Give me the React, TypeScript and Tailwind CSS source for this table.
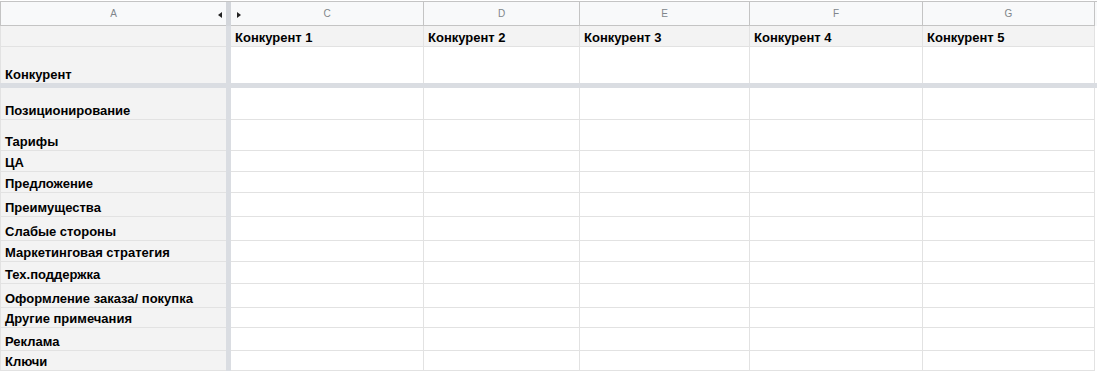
import React from "react";

// Ширины столбцов C..G (правая граница входит в ширину)
const cols = [
  { letter: "C", w: "w-[193px]", title: "Конкурент 1" },
  { letter: "D", w: "w-[156px]", title: "Конкурент 2" },
  { letter: "E", w: "w-[170px]", title: "Конкурент 3" },
  { letter: "F", w: "w-[173px]", title: "Конкурент 4" },
  { letter: "G", w: "w-[172px]", title: "Конкурент 5" },
];

const rows = [
  { label: "Позиционирование", h: "h-[32px]" },
  { label: "Тарифы", h: "h-[31px]" },
  { label: "ЦА", h: "h-[21px]" },
  { label: "Предложение", h: "h-[21px]" },
  { label: "Преимущества", h: "h-[24px]" },
  { label: "Слабые стороны", h: "h-[24px]" },
  { label: "Маркетинговая стратегия", h: "h-[21px]" },
  { label: "Тех.поддержка", h: "h-[22px]" },
  { label: "Оформление заказа/ покупка", h: "h-[24px]" },
  { label: "Другие примечания", h: "h-[20px]" },
  { label: "Реклама", h: "h-[23px]" },
  { label: "Ключи", h: "h-[20px]" },
];

function FreezeBar() {
  return <div className="w-[5px] shrink-0 bg-[#dadde2]" />;
}

function LabelCell({ children }: { children?: React.ReactNode }) {
  return (
    <div className="w-[226px] shrink-0 flex items-end pl-[4px] pb-0 bg-[#f3f3f3] border-b border-l border-[#e2e2e2] text-[13px] font-bold leading-[16px] text-black whitespace-nowrap">
      {children}
    </div>
  );
}

function Row({ label, h }: { label: string; h: string }) {
  return (
    <div className={`flex ${h}`}>
      <LabelCell>{label}</LabelCell>
      <FreezeBar />
      {cols.map((c) => (
        <div key={c.letter} className={`${c.w} shrink-0 bg-white border-r border-b border-[#e2e2e2]`} />
      ))}
    </div>
  );
}

export default function App() {
  return (
    <div
      className="w-[1097px] h-[372px] overflow-hidden bg-white pt-[1px]"
      style={{ fontFamily: "'Liberation Sans', Arial, sans-serif" }}
    >
      {/* ── буквы столбцов ── */}
      <div className="flex h-[25px] border-t border-[#c4c4c4] bg-[#f8f9fa] text-[10px] text-[#80868b]">
        <div className="w-[226px] shrink-0 relative flex items-center justify-center border-b border-l border-[#c4c4c4]">
          A
          <svg className="absolute right-[4px] top-[10px]" width="4" height="6" viewBox="0 0 4 6">
            <path d="M4 0 L0 3 L4 6 Z" fill="#222" />
          </svg>
        </div>
        <div className="w-[5px] shrink-0 bg-[#d3d6db]" />
        {cols.map((c, i) => (
          <div
            key={c.letter}
            className={`${c.w} shrink-0 relative flex items-center justify-center border-r border-b border-[#c4c4c4]`}
          >
            {c.letter}
            {i === 0 && (
              <svg className="absolute left-[6px] top-[10px]" width="4" height="6" viewBox="0 0 4 6">
                <path d="M0 0 L4 3 L0 6 Z" fill="#222" />
              </svg>
            )}
          </div>
        ))}
      </div>

      {/* ── строка 1: заголовки конкурентов ── */}
      <div className="flex h-[21px]">
        <LabelCell />
        <FreezeBar />
        {cols.map((c) => (
          <div
            key={c.letter}
            className={`${c.w} shrink-0 flex items-end pl-[4px] pb-0 bg-[#f3f3f3] border-r border-b border-[#e2e2e2] text-[13px] font-bold leading-[16px] text-black whitespace-nowrap`}
          >
            {c.title}
          </div>
        ))}
      </div>

      {/* ── строка 2: Конкурент ── */}
      <div className="flex h-[36px]">
        <div className="w-[226px] shrink-0 flex items-end pl-[4px] pb-0 bg-[#f3f3f3] border-l border-[#e2e2e2] text-[13px] font-bold leading-[16px] text-black">
          Конкурент
        </div>
        <FreezeBar />
        {cols.map((c) => (
          <div key={c.letter} className={`${c.w} shrink-0 bg-white border-r border-[#e2e2e2]`} />
        ))}
      </div>

      {/* горизонтальная линия закрепления */}
      <div className="h-[5px] bg-[#dadde2]" />

      {rows.map((r) => (
        <Row key={r.label} label={r.label} h={r.h} />
      ))}
    </div>
  );
}
